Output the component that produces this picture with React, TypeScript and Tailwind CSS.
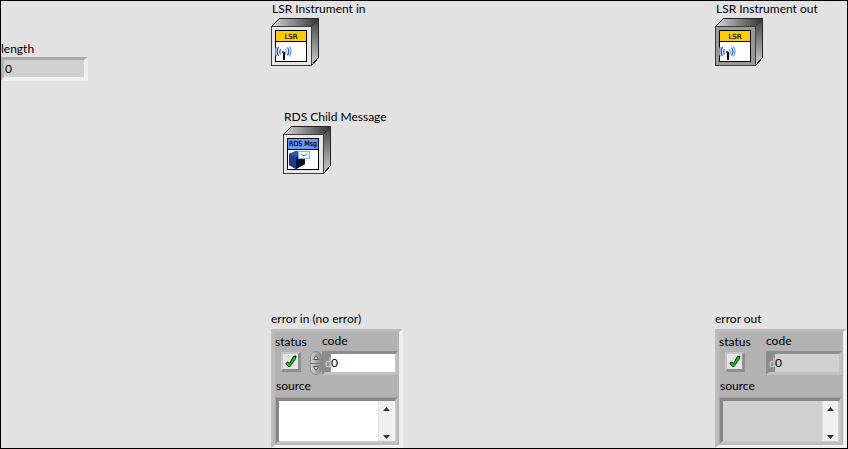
import { useState } from "react";

type CubeProps = { face: string; kind: "lsr" | "rds" };

/** 48px class-object terminal: a bevelled cube with a 32px glyph on its face. */
function ClassCube({ face, kind }: CubeProps) {
  const id = `${kind}-${face.slice(1)}`;
  return (
    <svg width="48" height="48" viewBox="0 0 48 48" className="block" aria-hidden="true" shapeRendering="crispEdges">
      <defs>
        <linearGradient id={`${id}-top`} x1="0" x2="1" y1="0" y2="0">
          <stop offset="0" stopColor="#d8d8d8" />
          <stop offset="1" stopColor="#303030" />
        </linearGradient>
        <linearGradient id={`${id}-side`} x1="0" x2="0" y1="0" y2="1">
          <stop offset="0" stopColor="#404040" />
          <stop offset="1" stopColor="#d0d0d0" />
        </linearGradient>
      </defs>
      <polygon points="0,8 8,0 48,0 41,8" fill={`url(#${id}-top)`} />
      <polygon points="41,8 48,0 48,40 41,48" fill={`url(#${id}-side)`} />
      <path d="M0.5 8.5L8.5 0.5H47.5V39.5L40.5 47.5" fill="none" stroke="#222" />
      <path d="M40.5 8.5L47.5 1.5" fill="none" stroke="#333" />
      <rect x="0.5" y="8.5" width="40" height="39" fill={face} stroke="#3c3c3c" />
      <rect x="4.5" y="12.5" width="31" height="31" fill="#fff" stroke="#000" />
      {kind === "lsr" ? <LsrGlyph /> : <RdsGlyph />}
    </svg>
  );
}

function LsrGlyph() {
  return (
    <g>
      <rect x="5" y="13" width="30" height="10" fill="#ffcc00" />
      <path d="M5 23.5H35" stroke="#000" />
      <text x="20" y="21" textAnchor="middle" fontSize="7" fontFamily="DejaVu Sans, sans-serif" fill="#000" stroke="#000" strokeWidth="0.2">
        LSR
      </text>
      <rect x="12" y="34" width="2" height="8" fill="#000" />
      <rect x="11" y="33" width="2" height="2" fill="#444" />
      <g fill="none" strokeWidth="1.3" shapeRendering="auto">
        <path d="M5.500 29Q3.500 33.500 5.500 38.500" stroke="#6ba0f0" />
        <path d="M7.500 29Q5 33.500 7.500 38" stroke="#1c46c0" />
        <path d="M9.500 31Q8 33.500 9.500 36.500" stroke="#2858d8" />
        <path d="M14.500 31Q16 33.500 14.500 36.500" stroke="#6ba0f0" />
        <path d="M16.500 29.500Q19 33.500 16.500 37.500" stroke="#2858d8" />
        <path d="M18.500 28.500Q21.500 33.500 18.500 38.500" stroke="#6ba0f0" />
      </g>
    </g>
  );
}

function RdsGlyph() {
  return (
    <g>
      <rect x="5" y="13" width="30" height="10" fill="#6699ff" />
      <path d="M5 23.5H35" stroke="#000" />
      <text x="20" y="20" textAnchor="middle" fontSize="7" fontFamily="DejaVu Sans Condensed, DejaVu Sans, sans-serif" fill="#000" stroke="#000" strokeWidth="0.2">
        RDS Msg
      </text>
      <g shapeRendering="auto">
        <polygon points="6,28 13,25 22,27 22,38 13,43 6,39" fill="#0c1838" />
        <polygon points="6,28 13,30 13,43 6,39" fill="#1c3a8c" />
        <polygon points="6,28 13,25 22,27 13,31" fill="#2c55b8" />
        <polygon points="13,31 22,27 22,38 13,43" fill="#0a1230" />
      </g>
      <rect x="15.5" y="25.500" width="11" height="7" fill="#f2f8ff" stroke="#8cb4dc" />
      <path d="M18 27.500L19.500 29.500H22.500L24 27.500" fill="none" stroke="#4d80c0" shapeRendering="auto" />
    </g>
  );
}

function ClassTerminal({ label, face, kind }: CubeProps & { label: string }) {
  return (
    <figure>
      <figcaption className="mb-px whitespace-nowrap pl-px leading-4">{label}</figcaption>
      <ClassCube face={face} kind={kind} />
    </figure>
  );
}

function CheckMark() {
  return (
    <svg width="12" height="13" viewBox="0 0 12 13" aria-hidden="true">
      <path d="M1 8.500L2.500 7L4.500 8.500L8.500 1.500L11 1L10.500 3.500L5 11.500L3.500 11.500Z" fill="#00f000" stroke="#000" strokeWidth="1" />
    </svg>
  );
}

function Arrow({ down = false }: { down?: boolean }) {
  return (
    <svg width="7" height="4" viewBox="0 0 7 4" className="block" aria-hidden="true">
      <path d={down ? "M0 0H7L3.5 4Z" : "M0 4H7L3.5 0Z"} fill="#333" />
    </svg>
  );
}

function Spinner({ onStep }: { onStep: (by: number) => void }) {
  return (
    <div className="flex h-6 w-3 flex-col overflow-hidden rounded-[6px] border border-[#8a8a8a] bg-linear-to-r from-[#d2d2d2] to-[#8c8c8c]">
      <button type="button" aria-label="Increase code" onClick={() => onStep(1)} className="flex flex-1 items-center justify-center border-b border-[#777]">
        <svg width="6" height="5" viewBox="0 0 6 5" aria-hidden="true">
          <path d="M0.500 4.500L3 0.500L5.500 4.500Z" fill="#ddd" stroke="#555" />
        </svg>
      </button>
      <button type="button" aria-label="Decrease code" onClick={() => onStep(-1)} className="flex flex-1 items-center justify-center">
        <svg width="6" height="5" viewBox="0 0 6 5" aria-hidden="true">
          <path d="M0.500 0.500L3 4.500L5.500 0.500Z" fill="#ddd" stroke="#555" />
        </svg>
      </button>
    </div>
  );
}

function ErrorCluster({ id, title, editable }: { id: string; title: string; editable: boolean }) {
  const [code, setCode] = useState(0);
  const field = editable ? "bg-white" : "bg-[#d1d1d1]";
  return (
    <section aria-labelledby={`${id}-title`} className="w-[132px]">
      <h2 id={`${id}-title`} className="mb-0.5 whitespace-nowrap leading-4">{title}</h2>
      <div className="border-t-3 border-r-4 border-b-3 border-l-4 border-t-[#bcbcbc] border-r-[#f0f0f0] border-b-[#f0f0f0] border-l-[#bcbcbc] bg-[#b2b2b2] pr-px">
        <div className="flex justify-between pt-px">
          <div className="flex flex-col pt-px">
            <label htmlFor={`${id}-status`} className="leading-4">status</label>
            <button
              id={`${id}-status`}
              type="button"
              className="mt-0.5 ml-1.5 flex size-5 items-center justify-center border-t-2 border-r-3 border-b-3 border-l-2 border-t-[#c6c6c6] border-r-[#8e8e8e] border-b-[#8e8e8e] border-l-[#c6c6c6] bg-[#e4e4e4]"
            >
              <CheckMark />
            </button>
          </div>
          <div className="flex items-end">
            {editable && <Spinner onStep={(by) => setCode(code + by)} />}
            <div className="flex flex-col">
              <label htmlFor={`${id}-code`} className="mb-0.5 leading-4">code</label>
              <div className={`flex h-6 w-[76px] border-3 border-t-[#8c8c8c] border-r-[#c2c2c2] border-b-[#c2c2c2] border-l-[#8c8c8c] ${field}`}>
                <span className="w-1.5 shrink-0 bg-[#8c8c8c] text-[11px] leading-[18px] text-[#dcdcdc]">d</span>
                <input
                  id={`${id}-code`}
                  type="text"
                  readOnly={!editable}
                  value={code}
                  onChange={(e) => setCode(Number(e.target.value) || 0)}
                  className="w-full min-w-0 leading-[18px] outline-none"
                />
              </div>
            </div>
          </div>
        </div>
        <label htmlFor={`${id}-source`} className="mt-[3px] mb-[3px] ml-px block leading-4">source</label>
        <div className="border-t border-r border-b-2 border-l border-t-[#a2a2a2] border-r-[#bcbcbc] border-b-[#bcbcbc] border-l-[#a2a2a2]">
          <div className={`flex h-[45px] border-t-3 border-r-2 border-b-2 border-l-3 border-t-[#868686] border-r-[#c6c6c6] border-b-[#c6c6c6] border-l-[#868686] ${field}`}>
            <textarea id={`${id}-source`} readOnly={!editable} className="min-w-0 flex-1 resize-none overflow-hidden outline-none" />
            <div className="mr-px flex w-4 flex-col items-center justify-between border-l border-[#e2e2e2] bg-[#f0f0f0]">
              <button type="button" aria-label="Scroll up" className="py-1.5"><Arrow /></button>
              <button type="button" aria-label="Scroll down" className="py-0.5"><Arrow down /></button>
            </div>
          </div>
        </div>
      </div>
    </section>
  );
}

export default function App() {
  return (
    <main className="flex min-h-screen border border-black bg-[#e2e2e2] font-['Lato','Noto_Sans',sans-serif] text-[12px] text-black">
      <div className="w-[270px] pt-10">
        <label htmlFor="length" className="block leading-4">length</label>
        <input
          id="length"
          type="text"
          readOnly
          value="0"
          className="block h-6 w-[87px] border-t-3 border-r-4 border-b-4 border-l-3 border-t-[#aaa] border-r-[#f0f0f0] border-b-[#f0f0f0] border-l-[#b4b4b4] bg-[#d1d1d1] pl-px outline-none"
        />
      </div>
      <div className="flex flex-1 flex-col justify-between">
        <div>
          <ClassTerminal label="LSR Instrument in" face="#e6e6e6" kind="lsr" />
          <div className="mt-[43px] ml-3">
            <ClassTerminal label="RDS Child Message" face="#e7e7e7" kind="rds" />
          </div>
        </div>
        <ErrorCluster id="error-in" title="error in (no error)" editable />
      </div>
      <div className="flex w-[132px] flex-col justify-between">
        <ClassTerminal label="LSR Instrument out" face="#999999" kind="lsr" />
        <ErrorCluster id="error-out" title="error out" editable={false} />
      </div>
    </main>
  );
}
